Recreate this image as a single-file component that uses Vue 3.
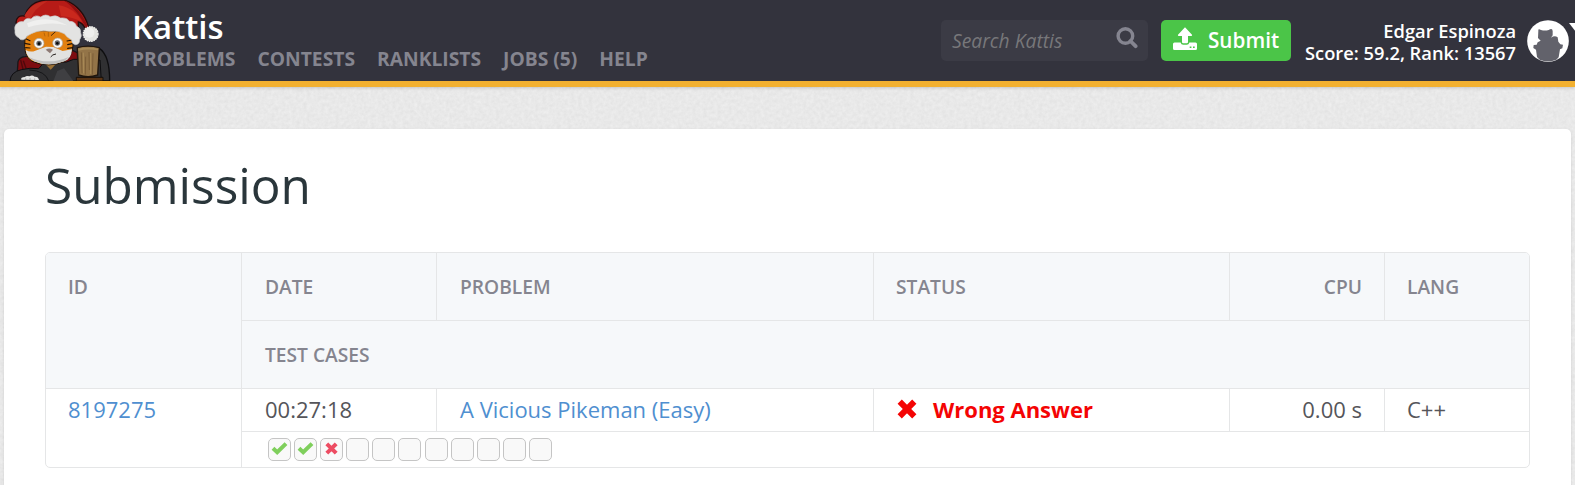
<script setup>
const nav = ['PROBLEMS', 'CONTESTS', 'RANKLISTS', 'JOBS (5)', 'HELP']
const tests = ['ok', 'ok', 'bad', '', '', '', '', '', '', '', '']
</script>

<template>
  <div class="page">
    <svg class="paper" width="1575" height="485">
      <filter id="grain" x="0" y="0" width="100%" height="100%" color-interpolation-filters="sRGB">
        <feTurbulence type="fractalNoise" baseFrequency="0.28" numOctaves="3" seed="4" />
        <feColorMatrix values="0.06 0 0 0 0.882  0.06 0 0 0 0.882  0.06 0 0 0 0.882  0 0 0 0 1" />
      </filter>
      <rect width="1575" height="485" filter="url(#grain)" />
    </svg>

    <header class="bar">
      <svg class="mascot" width="130" height="81" viewBox="0 0 390 243">
        <!-- cape and body -->
        <path d="M52 215 L54 185 Q58 172 75 170 L215 150 L232 158 L236 243 L50 243Z" fill="#7d0c10" stroke="#17171a" stroke-width="4" />
        <path d="M70 182 L80 210 M62 180 L70 212" stroke="#4e090c" stroke-width="4" />
        <path d="M298 145 Q329 165 329 243 L290 243Z" fill="#303032" stroke="#0e0e10" stroke-width="4" />
        <path d="M30 243 Q32 216 64 209 Q90 202 116 206 L130 190 L200 186 Q222 174 240 178 L300 180 L304 243Z" fill="#303032" stroke="#0e0e10" stroke-width="3" />
        <path d="M160 243 L172 213 L192 205 L220 243Z" fill="#3f3f42" />
        <path d="M135 191 L152 209 L168 192Z" fill="#9a7136" />
        <path d="M88 210 Q136 212 146 243" fill="none" stroke="#161618" stroke-width="3" />
        <!-- head -->
        <path d="M75 116 Q68 168 96 184 Q145 206 197 183 Q224 160 218 118 L194 82 L94 84Z" fill="#e2800f" stroke="#1c1410" stroke-width="3" />
        <path d="M77 150 Q92 158 106 152 L138 140 L160 141 L188 153 L216 148 Q214 179 192 184 Q145 202 103 184 Q80 173 77 150Z" fill="#e2e2e0" />
        <path d="M84 170 Q145 198 208 170 L193 184 Q145 202 103 184Z" fill="#bfbfbe" />
        <path d="M77 116 L90 122 M74 130 L90 133 M77 143 L90 144 M217 120 L201 123 M220 130 L203 134 M218 143 L203 145" stroke="#241508" stroke-width="3.5" stroke-linecap="round" />
        <path d="M132 98 L135 109 M145 96 L145 110" stroke="#b8650b" stroke-width="3" />
        <path d="M171 91 L153 107" stroke="#26170d" stroke-width="2.5" />
        <circle cx="117" cy="130" r="15" fill="#f7f7f6" stroke="#a8a29a" stroke-width="2" />
        <circle cx="173" cy="129" r="15" fill="#f7f7f6" stroke="#a8a29a" stroke-width="2" />
        <circle cx="117" cy="130" r="8" fill="#64666a" />
        <circle cx="172" cy="129" r="8" fill="#64666a" />
        <circle cx="117" cy="131" r="4" fill="#08080a" />
        <circle cx="172" cy="130" r="4" fill="#08080a" />
        <path d="M137 149 Q148 142 159 149 L150 160Z" fill="#8e7b75" />
        <path d="M152 171 Q157 163 168 162" fill="none" stroke="#25211f" stroke-width="3" />
        <!-- hat -->
        <path d="M48 67 Q50 44 74 48 Q88 4 137 0 L192 0 Q248 18 266 82 L255 84 Q247 68 235 66 L235 92 L59 92Z" fill="#b71b17" stroke="#260c0c" stroke-width="4" />
        <path d="M73 48 Q91 9 142 4 Q100 28 91 58Z" fill="#c32b20" />
        <path d="M176 16 Q225 24 247 67 Q218 50 183 48Z" fill="#c9281d" />
        <path d="M192 1 Q236 16 265 82 L258 84 Q235 33 192 1Z" fill="#8e1111" />
        <path d="M49 72 Q58 62 70 65 Q78 51 93 57 Q105 42 122 51 Q137 40 151 50 Q169 43 181 54 Q202 52 208 64 Q226 64 229 78 Q244 85 242 98 Q247 108 239 119 Q239 133 227 134 Q215 133 215 120 Q201 113 193 101 Q174 90 151 94 Q118 88 94 101 Q78 108 77 115 Q65 125 56 113 Q43 107 45 92 Q42 80 49 72Z" fill="#e3e3e2" stroke="#cacaca" stroke-width="2" />
        <path d="M81 70 Q143 43 202 76 Q150 63 85 82Z" fill="#f0f0ef" />
        <circle cx="272" cy="102" r="22" fill="#e4e4e0" stroke="#f0f0ec" stroke-width="4" stroke-dasharray="5 2" />
        <circle cx="268" cy="98" r="15" fill="#efefed" />
        <!-- paw and mug -->
        <path d="M64 239 Q61 231 75 231 Q78 226 89 229 Q96 224 104 230 Q115 229 117 240Z" fill="#e4e4e2" />
        <path d="M77 235 v5 M90 234 v6 M104 235 v5" stroke="#8b8b8b" stroke-width="2" />
        <path d="M229 232 h80 v11 h-80z" fill="#593415" stroke="#17100b" stroke-width="3" />
        <path d="M232 143 Q263 134 298 143 L293 225 Q264 235 236 225Z" fill="#937448" stroke="#20160d" stroke-width="4" />
        <path d="M235 146 Q264 139 295 146 L294 151 Q264 145 235 152Z" fill="#a98c59" />
        <path d="M244 157 L246 220 M257 170 L256 224 M267 156 L268 210 M279 160 L277 224" stroke="#70532f" stroke-width="2" />
        <path d="M250 158 L251 220 M272 159 L272 222" stroke="#a98a56" stroke-width="3" />
      </svg>

      <div class="brand">
        <div class="name">Kattis</div>
        <nav><a v-for="item in nav" :key="item">{{ item }}</a></nav>
      </div>

      <div class="search">
        <span>Search Kattis</span>
        <svg width="22" height="22" viewBox="0 0 22 22">
          <circle cx="9.4" cy="9" r="7.3" fill="none" stroke="#858590" stroke-width="3.4" />
          <path d="M14.4 14 L19.6 19.2" stroke="#858590" stroke-width="3.8" stroke-linecap="round" />
        </svg>
      </div>

      <a class="submit">
        <svg width="24" height="24" viewBox="0 0 24 24" fill="#fff">
          <path d="M12 .2 L19 7.8 Q19.5 8.8 18.4 9 H15 V15 Q15 16.2 13.8 16.2 H10.2 Q9 16.2 9 15 V9 H5.6 Q4.5 8.8 5 7.8Z" />
          <path d="M1.5 15.5 H7.6 Q8.2 17.7 10.2 17.7 H13.8 Q15.8 17.7 16.4 15.5 H22.5 Q24 15.5 24 17 V21.5 Q24 23 22.5 23 H1.5 Q0 23 0 21.5 V17 Q0 15.5 1.5 15.5Z" />
          <path d="M16.7 19.4 h1.7 v1.7 h-1.7z M20 19.4 h1.7 v1.7 H20z" fill="#4bc548" />
        </svg>
        <span>Submit</span>
      </a>

      <div class="user">
        <div>Edgar Espinoza</div>
        <div>Score: 59.2, Rank: 13567</div>
      </div>

      <svg class="avatar" width="42" height="42" viewBox="0 0 126 126">
        <circle cx="63" cy="63" r="62.5" fill="#fff" />
        <path d="M34 32 Q33 24 42 30 Q54 33 65 30 Q76 22 77 33 L77 46 L72 53 Q83 45 92 52 L94 65 L100 73 L108 74 L106 85 L99 88 L95 112 L88 119 Q63 128 38 119 L30 111 L27 89 L19 84 L20 75 L29 74 L32 67 L41 62 L33 54Z" fill="#62626b" />
      </svg>
      <svg class="caret" width="6" height="9" viewBox="0 0 6 9"><path d="M0 0 H14 L7 9Z" fill="#fff" /></svg>
    </header>

    <main class="card">
      <h1>Submission</h1>
      <section class="grid">
        <div class="c head tall">ID</div>
        <div class="c head top">DATE</div>
        <div class="c head top">PROBLEM</div>
        <div class="c head top near">STATUS</div>
        <div class="c head top right">CPU</div>
        <div class="c head top near last">LANG</div>
        <div class="c head wide">TEST CASES</div>

        <div class="c tall id"><a>8197275</a></div>
        <div class="c">00:27:18</div>
        <div class="c"><a>A Vicious Pikeman (Easy)</a></div>
        <div class="c wrong">
          <svg width="20" height="20" viewBox="0 0 20 20"><path d="M2.7 2.7 L17.3 17.3 M17.3 2.7 L2.7 17.3" stroke="#f40404" stroke-width="6" /></svg>
          <b>Wrong Answer</b>
        </div>
        <div class="c right">0.00 s</div>
        <div class="c near last">C++</div>
        <div class="c wide tests">
          <i v-for="(t, n) in tests" :key="n">
            <svg v-if="t === 'ok'" width="17" height="15" viewBox="0 0 17 15"><path d="M2 7.3 L6.2 11.2 L15 2.6" fill="none" stroke="#7fcf5c" stroke-width="4" /></svg>
            <svg v-if="t === 'bad'" width="15" height="15" viewBox="0 0 15 15"><path d="M2.8 2.8 L12.2 12.2 M12.2 2.8 L2.8 12.2" stroke="#ed4c62" stroke-width="4" /></svg>
          </i>
        </div>
      </section>
    </main>
  </div>
</template>

<style>
body { overflow: hidden; }
</style>

<style scoped>
.page {
  position: relative;
  width: 1575px;
  height: 485px;
  overflow: hidden;
  background: #e8e8e8;
  font-family: "Open Sans", "Noto Sans", sans-serif;
}
.paper { position: absolute; left: 0; top: 0; }
.bar {
  position: relative;
  box-sizing: border-box;
  height: 87px;
  display: flex;
  align-items: flex-start;
  background: #33333d;
  border-bottom: 6px solid #f2b030;
  box-shadow: 0 1px 3px rgba(0, 0, 0, .16);
  white-space: nowrap;
}
.bar > * { flex: none; }
.brand { width: 809px; margin-left: 2px; }
.name { margin-top: 7px; font-size: 33px; line-height: 40px; font-weight: 600; color: #fff; }
nav { display: flex; gap: 22px; font-size: 19.25px; line-height: 24px; font-weight: 700; color: #85858f; }
.search {
  box-sizing: border-box;
  width: 207px;
  height: 41px;
  margin-top: 20px;
  padding: 0 10px 0 11px;
  display: flex;
  align-items: center;
  justify-content: space-between;
  border-radius: 5px;
  background: #3b3b45;
  color: #77777a;
  font-size: 19.3px;
  font-style: italic;
}
.search svg { margin-top: -5px; }
.submit {
  box-sizing: border-box;
  width: 130px;
  height: 41px;
  margin: 20px 0 0 13px;
  padding: 0 0 2px 12px;
  display: flex;
  align-items: center;
  gap: 11px;
  border-radius: 5px;
  background: #4bc548;
  color: #fff;
  font-size: 20.7px;
  font-weight: 600;
}
.submit svg { margin-top: -2px; }
.user { width: 225px; margin-top: 20px; font-size: 18.3px; line-height: 22px; font-weight: 600; color: #fff; text-align: right; }
.avatar { margin: 19.5px 0 0 11px; }
.caret { margin: 23px 0 0 0; }
.card {
  position: relative;
  box-sizing: border-box;
  width: 1567px;
  height: 380px;
  margin: 42px 0 0 4px;
  padding: 26px 41px 0;
  border-radius: 5px 5px 0 0;
  background: #fff;
  box-shadow: 0 1px 3px rgba(0, 0, 0, .1);
}
h1 { height: 60px; margin: 0 0 37px; font-size: 49.5px; line-height: 60px; font-weight: 400; color: #2a363b; }
.grid {
  box-sizing: border-box;
  display: grid;
  grid-template-columns: 196px 195px 437px 356px 155px 144px;
  grid-template-rows: 68px 68px 43px 36px;
  height: 216px;
  border: 1px solid #e5e6e7;
  border-radius: 5px;
  overflow: hidden;
  color: #55555a;
  font-size: 22px;
}
.c {
  box-sizing: border-box;
  display: flex;
  align-items: center;
  padding: 0 0 2px 23px;
  border-right: 1px solid #e5e6e7;
  border-bottom: 1px solid #e5e6e7;
  white-space: nowrap;
}
.head { padding-bottom: 1px; background: #f6f8fa; color: #85858f; font-size: 19.2px; font-weight: 600; }
.top { padding-bottom: 0; }
.near { padding-left: 22px; }
.tall { grid-row: span 2; align-items: flex-start; padding-left: 22px; line-height: 40px; }
.head.tall { line-height: 67px; }
.wide { grid-column: 2 / 7; border-right: 0; }
.last { border-right: 0; }
.right { justify-content: flex-end; padding-left: 0; padding-right: 22px; }
.id, .tests { border-bottom: 0; }
.c a { color: #4f8fd0; }
.wrong { gap: 16px; color: #f40404; }
.wrong b { font-weight: 700; }
.tests { align-items: flex-start; padding: 6px 0 0 26px; gap: 3.1px; }
.tests i {
  box-sizing: border-box;
  width: 23px;
  height: 23px;
  display: flex;
  justify-content: center;
  align-items: center;
  border: 1px solid #c5c5c5;
  border-radius: 5px;
  background: #f9f9f9;
}
.tests svg { flex: none; margin-top: -2px; }
</style>
